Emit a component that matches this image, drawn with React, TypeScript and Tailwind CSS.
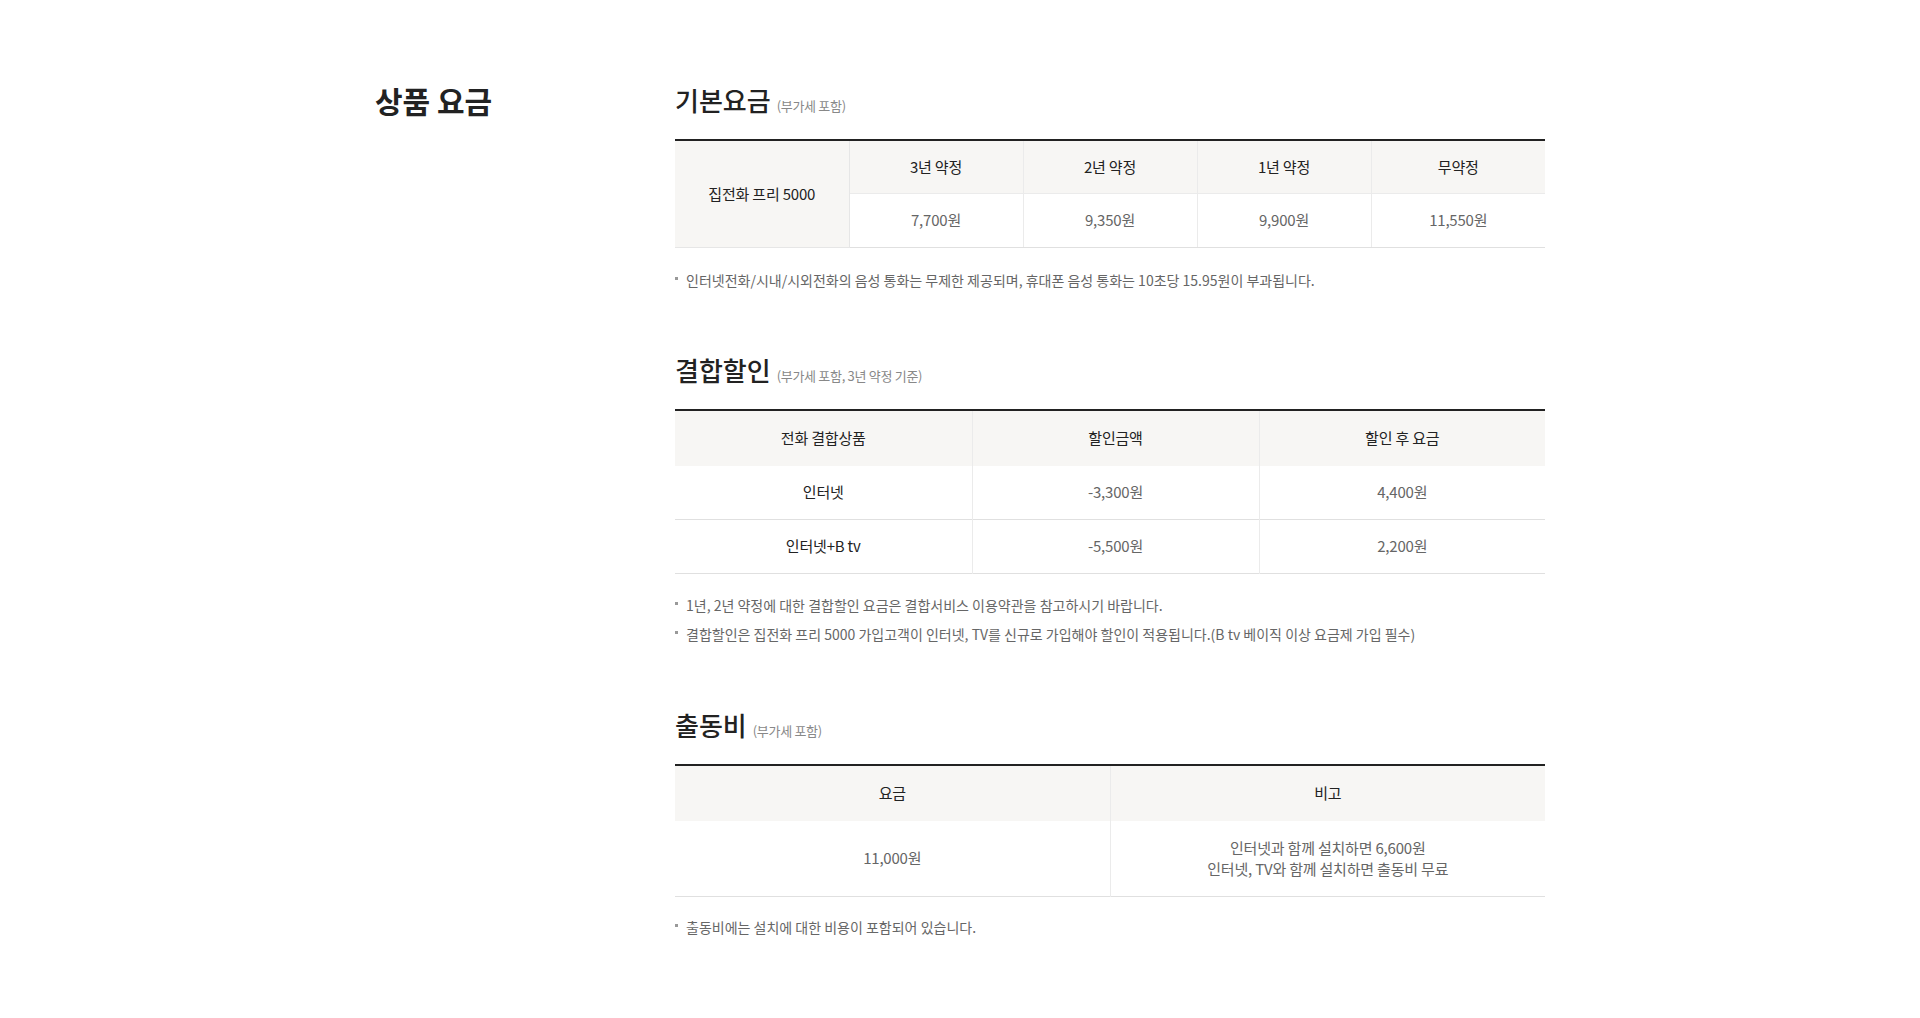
import React from "react";

const font = { fontFamily: '"Noto Sans CJK KR", "Noto Sans", sans-serif' };

function Heading({ title, sub }: { title: string; sub: string }) {
  return (
    <div className="flex items-baseline">
      <h3 className="text-[26px] leading-[32px] font-medium text-[#222]">{title}</h3>
      <span className="ml-[6px] text-[13px] text-[#888] tracking-[-0.3px]">{sub}</span>
    </div>
  );
}

function Note({ children }: { children: React.ReactNode }) {
  return (
    <li className="relative pl-[11px] text-[14px] leading-[20px] text-[#666]">
      <span className="absolute left-0 top-[7px] w-[3px] h-[3px] bg-[#999]" />
      {children}
    </li>
  );
}

export default function App() {
  return (
    <div className="bg-white min-h-[1018px]" style={font}>
      <div className="w-[1170px] mx-auto flex pt-[84px] pb-[80px]">
        <div className="w-[300px] shrink-0">
          <h2 className="text-[30px] leading-[32px] font-bold text-[#222]">상품 요금</h2>
        </div>
        <div className="w-[870px]">
          {/* 기본요금 */}
          <section>
            <Heading title="기본요금" sub="(부가세 포함)" />
            <table className="mt-[23px] w-full table-fixed border-collapse border-t-2 border-[#222] text-[15px] tracking-[-0.2px]">
              <tbody>
                <tr className="h-[53px]">
                  <td rowSpan={2} className="bg-[#f7f6f4] text-center text-[#222] border-r border-b border-[#e6e6e6] border-t-0">
                    집전화 프리 5000
                  </td>
                  {["3년 약정", "2년 약정", "1년 약정", "무약정"].map((t, i) => (
                    <td
                      key={t}
                      className={`bg-[#f7f6f4] text-center text-[#222] border-b border-[#ebebeb] ${i < 3 ? "border-r" : ""}`}
                    >
                      {t}
                    </td>
                  ))}
                </tr>
                <tr className="h-[54px]">
                  {["7,700원", "9,350원", "9,900원", "11,550원"].map((t, i) => (
                    <td
                      key={t}
                      className={`text-center text-[#666] border-b border-[#e0e0e0] ${i < 3 ? "border-r border-r-[#ebebeb]" : ""}`}
                    >
                      {t}
                    </td>
                  ))}
                </tr>
              </tbody>
            </table>
            <ul className="mt-[22px]">
              <Note>인터넷전화/시내/시외전화의 음성 통화는 무제한 제공되며, 휴대폰 음성 통화는 10초당 15.95원이 부과됩니다.</Note>
            </ul>
          </section>

          {/* 결합할인 */}
          <section className="mt-[64px]">
            <Heading title="결합할인" sub="(부가세 포함, 3년 약정 기준)" />
            <table className="mt-[23px] w-full table-fixed border-collapse border-t-2 border-[#222] text-[15px] tracking-[-0.2px]">
              <colgroup>
                <col className="w-[297px]" />
                <col className="w-[287px]" />
                <col />
              </colgroup>
              <thead>
                <tr className="h-[56px] bg-[#f7f6f4]">
                  <th className="font-normal text-center text-[#222] border-r border-[#ebebeb]">전화 결합상품</th>
                  <th className="font-normal text-center text-[#222] border-r border-[#ebebeb]">할인금액</th>
                  <th className="font-normal text-center text-[#222]">할인 후 요금</th>
                </tr>
              </thead>
              <tbody>
                {[
                  ["인터넷", "-3,300원", "4,400원"],
                  ["인터넷+B tv", "-5,500원", "2,200원"],
                ].map((r) => (
                  <tr key={r[0]} className="h-[54px] border-b border-[#e0e0e0]">
                    <td className="text-center text-[#222] border-r border-[#ebebeb]">{r[0]}</td>
                    <td className="text-center text-[#666] border-r border-[#ebebeb]">{r[1]}</td>
                    <td className="text-center text-[#666]">{r[2]}</td>
                  </tr>
                ))}
              </tbody>
            </table>
            <ul className="mt-[21px] flex flex-col gap-[9px]">
              <Note>1년, 2년 약정에 대한 결합할인 요금은 결합서비스 이용약관을 참고하시기 바랍니다.</Note>
              <Note>결합할인은 집전화 프리 5000 가입고객이 인터넷, TV를 신규로 가입해야 할인이 적용됩니다.(B tv 베이직 이상 요금제 가입 필수)</Note>
            </ul>
          </section>

          {/* 출동비 */}
          <section className="mt-[65px]">
            <Heading title="출동비" sub="(부가세 포함)" />
            <table className="mt-[23px] w-full table-fixed border-collapse border-t-2 border-[#222] text-[15px] tracking-[-0.2px]">
              <thead>
                <tr className="h-[56px] bg-[#f7f6f4]">
                  <th className="font-normal text-center text-[#222] border-r border-[#ebebeb]">요금</th>
                  <th className="font-normal text-center text-[#222]">비고</th>
                </tr>
              </thead>
              <tbody>
                <tr className="h-[75px] border-b border-[#e0e0e0]">
                  <td className="text-center text-[#666] border-r border-[#ebebeb]">11,000원</td>
                  <td className="text-center text-[#666] leading-[21px]">
                    인터넷과 함께 설치하면 6,600원
                    <br />
                    인터넷, TV와 함께 설치하면 출동비 무료
                  </td>
                </tr>
              </tbody>
            </table>
            <ul className="mt-[20px]">
              <Note>출동비에는 설치에 대한 비용이 포함되어 있습니다.</Note>
            </ul>
          </section>
        </div>
      </div>
    </div>
  );
}
